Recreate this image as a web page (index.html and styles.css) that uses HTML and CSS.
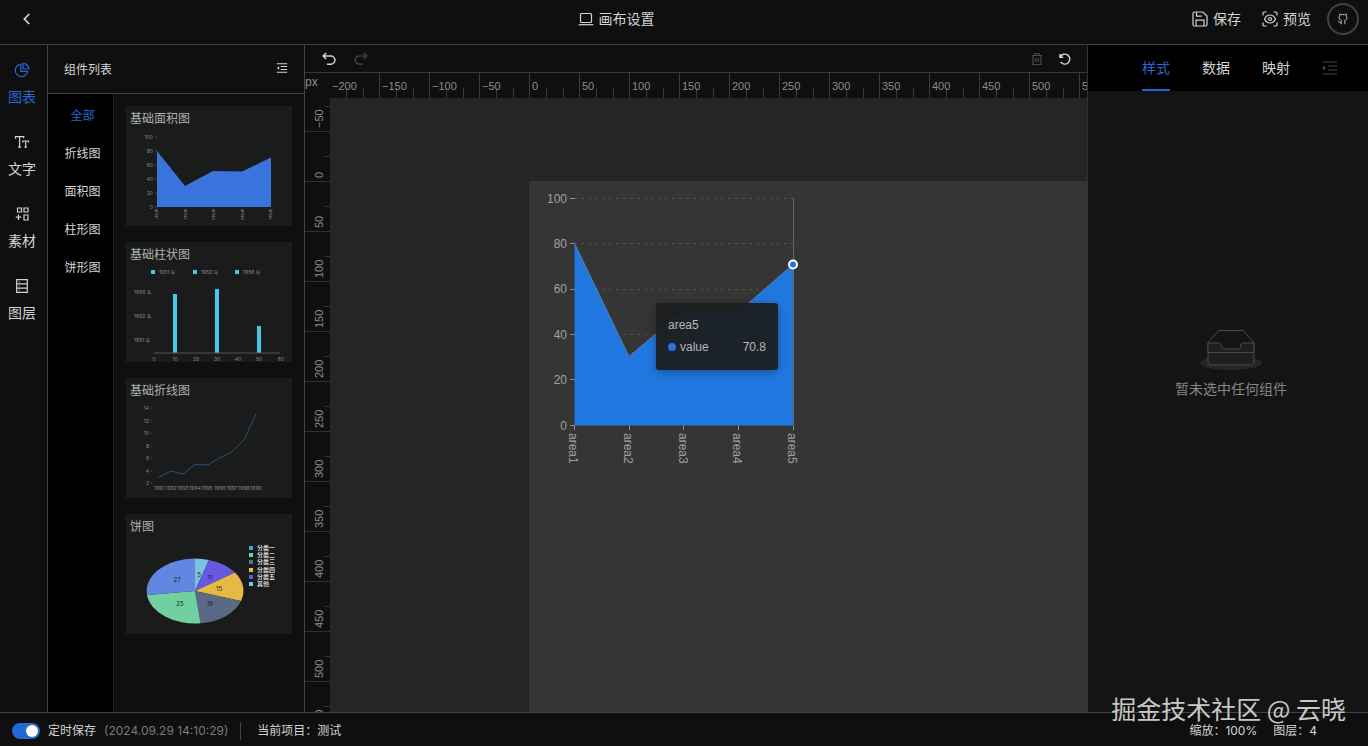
FILE: index.html
```html
<!DOCTYPE html>
<html lang="zh-CN">

<head>
    <meta charset="UTF-8">
    <meta name="viewport" content="width=device-width, initial-scale=1.0">
    <title>画布设置</title>
    <link rel="stylesheet" href="styles.css">
</head>

<body>

    <div class="app">

        <!-- Top bar -->
        <header class="topbar">
            <button class="back-btn" type="button" aria-label="返回">
                <svg class="icon" viewBox="0 0 16 16"><path d="M10.200 3 5.400 8l4.800 5" stroke-width="1.800" /></svg>
            </button>
            <button class="tool-btn" type="button">
                <svg class="icon" viewBox="0 0 16 16"><rect x="2.500" y="2.500" width="11" height="9" rx="1" /><path d="M.7 13.700h14.600" /></svg>
                画布设置
            </button>
            <div class="topbar-right">
                <div class="tools">
                    <button class="tool-btn" type="button">
                        <svg class="icon" viewBox="0 0 16 16"><path d="M1 2.500A1.500 1.500 0 0 1 2.500 1h8.300L15 5v8.500a1.500 1.500 0 0 1-1.500 1.500h-11A1.500 1.500 0 0 1 1 13.500zM4 15V9.200h8V15M4.500 1v4.200h5.200" /></svg>
                        保存
                    </button>
                    <button class="tool-btn" type="button">
                        <svg class="icon" viewBox="0 0 16 16"><path d="M1 4.500V2.200A1.200 1.200 0 0 1 2.200 1H4.500M11.500 1h2.300A1.200 1.200 0 0 1 15 2.200v2.300M15 11.500v2.300a1.200 1.200 0 0 1-1.200 1.200h-2.300M4.500 15H2.200A1.200 1.200 0 0 1 1 13.800v-2.300M2.500 8C3.700 5.300 5.600 4 8 4s4.300 1.300 5.500 4c-1.200 2.700-3.100 4-5.500 4S3.700 10.700 2.500 8z" /><circle cx="8" cy="8" r="1.500" /></svg>
                        预览
                    </button>
                </div>
                <a class="avatar" href="#" aria-label="GitHub">
                    <svg class="icon icon-sm" viewBox="0 0 16 16"><path d="M5.500 15v-3.200c0-.8.200-1.200.600-1.600C4 9.800 2.800 8.700 2.800 6.300c0-1 .2-1.700.8-2.400-.3-.8-.2-1.700.1-2.500.9 0 1.700.4 2.300.9a8 8 0 0 1 4 0c.6-.5 1.400-.9 2.300-.9.3.8.4 1.700.1 2.500.6.7.8 1.400.8 2.400 0 2.400-1.200 3.500-3.300 3.900.4.4.6.8.6 1.600V15M5.500 13c-2.500.4-2.700-1.700-4.300-1.900" /></svg>
                </a>
            </div>
        </header>

        <main class="main">

            <!-- Side menu -->
            <nav class="side-nav">
                <button class="side-item active" type="button">
                    <svg class="icon" viewBox="0 0 16 16"><path d="M6.800 2.200A6.200 6.200 0 1 0 13.600 9.400H6.800zM9 1.300V7h5.700A5.800 5.800 0 0 0 9 1.300z" /></svg>
                    图表
                </button>
                <button class="side-item" type="button">
                    <svg class="icon" viewBox="0 0 16 16"><path d="M1.500 4.800V2.700h8.200v1.500M5.600 2.700v10.500M4 13.200h3.200M8.800 8.500V7h5.700v1.500M11.700 7v6.200M10.400 13.200h2.600" /></svg>
                    文字
                </button>
                <button class="side-item" type="button">
                    <svg class="icon" viewBox="0 0 16 16"><path d="M3.500 2h4v4h-4zM10 2h4v4h-4zM10 9h4v5h-4zM4.500 8.500v5.500M1.800 11.200h5.500" /></svg>
                    素材
                </button>
                <button class="side-item" type="button">
                    <svg class="icon" viewBox="0 0 16 16"><path d="M2.700 1.700h10.600v12.600H2.700zM2.700 5.900h10.600M2.700 10.100h10.600M4.800 3.800h.8M4.800 8h.8M4.800 12.200h.8" /></svg>
                    图层
                </button>
            </nav>

            <!-- Component list -->
            <section class="components">
                <div class="components-head">
                    <h2>组件列表</h2>
                    <button class="icon-btn" type="button" aria-label="收起">
                        <svg class="icon icon-sm" viewBox="0 0 14 14"><path d="M1 2h12M5.500 5.300H13M5.500 8.700H13M1 12h12" /><path class="fill" d="M3.700 5v4L1 7z" /></svg>
                    </button>
                </div>
                <div class="components-body">
                    <div class="categories">
                        <button class="category active" type="button">全部</button>
                        <button class="category" type="button">折线图</button>
                        <button class="category" type="button">面积图</button>
                        <button class="category" type="button">柱形图</button>
                        <button class="category" type="button">饼形图</button>
                    </div>
                    <div class="cards">

                        <article class="card">
                            <h3>基础面积图</h3>
                            <svg class="thumb" viewBox="0 0 166 96">
                                <g class="end">
                                    <text x="27" y="9">100</text><text x="27" y="23">80</text><text x="27" y="37">60</text>
                                    <text x="27" y="51">40</text><text x="27" y="65">20</text><text x="27" y="79">0</text>
                                </g>
                                <path class="thumb-axis" d="M29 7h2M29 21h2M29 35h2M29 49h2M29 63h2M29 77h2" />
                                <path fill="#3974dc" d="M31 21 59 56 87 41 116 41.500 145 27.500V77H31z" />
                                <g class="tiny">
                                    <text transform="translate(29 79) rotate(90)">area1</text>
                                    <text transform="translate(58 79) rotate(90)">area2</text>
                                    <text transform="translate(86 79) rotate(90)">area3</text>
                                    <text transform="translate(115 79) rotate(90)">area4</text>
                                    <text transform="translate(143 79) rotate(90)">area5</text>
                                </g>
                            </svg>
                        </article>

                        <article class="card">
                            <h3>基础柱状图</h3>
                            <svg class="thumb" viewBox="0 0 166 96">
                                <g fill="#46c8ea">
                                    <rect x="25" y="4" width="4" height="4" /><rect x="67" y="4" width="4" height="4" /><rect x="109" y="4" width="4" height="4" />
                                    <rect x="47" y="28" width="4" height="59" /><rect x="89" y="23" width="4" height="64" /><rect x="131" y="60" width="4" height="27" />
                                </g>
                                <text x="33" y="8">1951 年</text><text x="75" y="8">1952 年</text><text x="117" y="8">1956 年</text>
                                <text x="8" y="28">1956 年</text><text x="8" y="52">1952 年</text><text x="8" y="76">1951 年</text>
                                <path class="thumb-axis" d="M28 87h126" />
                                <g class="mid">
                                    <text x="28" y="95">0</text><text x="49" y="95">10</text><text x="70" y="95">20</text><text x="91" y="95">30</text>
                                    <text x="112" y="95">40</text><text x="133" y="95">50</text><text x="155" y="95">60</text>
                                </g>
                            </svg>
                        </article>

                        <article class="card">
                            <h3>基础折线图</h3>
                            <svg class="thumb" viewBox="0 0 166 96">
                                <g class="end">
                                    <text x="23" y="8">14</text><text x="23" y="21">12</text><text x="23" y="33">10</text><text x="23" y="46">8</text>
                                    <text x="23" y="58">6</text><text x="23" y="71">4</text><text x="23" y="83">2</text>
                                </g>
                                <path class="thumb-axis" d="M25 6h1M25 19h1M25 31h1M25 44h1M25 56h1M25 69h1M25 81h1" />
                                <path class="thumb-axis faint" d="M43 44h90" stroke-dasharray="1 2 1 24" />
                                <path fill="none" stroke="#2f4d78" stroke-width="1" d="M32.500 75.500 44.500 69 57 72 69 62.500 81.500 63 93.500 56 105.500 50 118 38 130 12" />
                                <g class="mid">
                                    <text x="33" y="88">1991</text><text x="45" y="88">1992</text><text x="57" y="88">1993</text>
                                    <text x="69" y="88">1994</text><text x="81" y="88">1995</text><text x="94" y="88">1996</text>
                                    <text x="106" y="88">1997</text><text x="118" y="88">1998</text><text x="130" y="88">1999</text>
                                </g>
                            </svg>
                        </article>

                        <article class="card">
                            <h3>饼图</h3>
                            <svg class="thumb" viewBox="0 0 166 96">
                                <path fill="#7cc0e0" d="M69 53V20.500A48.500 32.500 0 0 1 83 22z" />
                                <path fill="#6659e0" d="M69 53 83 22A48.500 32.500 0 0 1 109 34.500z" />
                                <path fill="#e6b944" d="M69 53 109 34.500A48.500 32.500 0 0 1 115 63z" />
                                <path fill="#5c6985" d="M69 53 115 63A48.500 32.500 0 0 1 74.500 85.300z" />
                                <path fill="#72cfa0" d="M69 53 74.500 85.300A48.500 32.500 0 0 1 21 57z" />
                                <path fill="#6187e2" d="M69 53 21 57A48.500 32.500 0 0 1 69 20.500z" />
                                <g class="mid pie-label">
                                    <text x="51" y="44">27</text><text x="73" y="39">5</text><text x="84" y="42">11</text>
                                    <text x="93" y="53">15</text><text x="84" y="68">18</text><text x="54" y="68">25</text>
                                </g>
                                <rect x="123" y="8" width="4" height="4" fill="#5b8ff9" /><rect x="123" y="15" width="4" height="4" fill="#5ad8a6" />
                                <rect x="123" y="22" width="4" height="4" fill="#5d7092" /><rect x="123" y="30" width="4" height="4" fill="#f6bd16" />
                                <rect x="123" y="37" width="4" height="4" fill="#4a62d8" /><rect x="123" y="44" width="4" height="4" fill="#6dc8ec" />
                                <g class="legend">
                                    <text x="131" y="12">分类一</text><text x="131" y="19">分类二</text><text x="131" y="26">分类三</text>
                                    <text x="131" y="34">分类四</text><text x="131" y="41">分类五</text><text x="131" y="48">其他</text>
                                </g>
                            </svg>
                        </article>

                    </div>
                </div>
            </section>

            <!-- Canvas -->
            <section class="editor">
                <div class="editor-tools">
                    <div class="tool-group">
                        <button class="icon-btn" type="button" aria-label="撤销">
                            <svg class="icon icon-md" viewBox="0 0 14 14"><path d="M4.200 1 1.200 4l3 3M1.400 4h7.400a3.900 3.900 0 0 1 0 8.200H5" stroke-width="1.500" /></svg>
                        </button>
                        <button class="icon-btn" type="button" aria-label="重做" disabled>
                            <svg class="icon icon-md" viewBox="0 0 14 14"><path d="M9.800 1l3 3-3 3M12.600 4H5.200a3.900 3.900 0 0 0 0 8.200H9" /></svg>
                        </button>
                    </div>
                    <div class="tool-group tool-group-right">
                        <button class="icon-btn" type="button" aria-label="删除" disabled>
                            <svg class="icon icon-md" viewBox="0 0 14 14"><path d="M2 3.500h10M5 3.500v-2h4v2M3 3.500v9h8v-9M5.800 6v4M8.200 6v4" /></svg>
                        </button>
                        <button class="icon-btn" type="button" aria-label="重置">
                            <svg class="icon icon-md" viewBox="0 0 14 14"><path d="M2 2v3.200h3.200M2.300 5A5 5 0 1 1 2.600 9.800" stroke-width="1.400" /></svg>
                        </button>
                    </div>
                </div>
                <div class="stage">
                    <div class="ruler-corner">px</div>
                    <div class="ruler ruler-x">
                        <span>−200</span><span>−150</span><span>−100</span><span>−50</span><span>0</span><span>50</span>
                        <span>100</span><span>150</span><span>200</span><span>250</span><span>300</span><span>350</span>
                        <span>400</span><span>450</span><span>500</span><span>550</span>
                    </div>
                    <div class="ruler ruler-y">
                        <span>−50</span><span>0</span><span>50</span><span>100</span><span>150</span><span>200</span><span>250</span>
                        <span>300</span><span>350</span><span>400</span><span>450</span><span>500</span><span>550</span>
                    </div>
                    <div class="viewport">
                        <div class="artboard">
                            <svg class="chart" width="290" height="300" viewBox="0 0 290 300">
                                <path class="chart-grid" d="M45 17.500h219M45 62.500h219M45 108.500h219M45 153.500h219M45 198.500h219" />
                                <path class="chart-area" d="M45.500 62.500 100 175.500 154.500 129.500 209 131.500 264 83.500V244.500H45.500z" />
                                <path class="chart-line" d="M45.500 62.500 100 175.500 154.500 129.500 209 131.500 264 83.500" />
                                <path class="chart-tick" d="M41 17.500h5M41 62.500h5M41 108.500h5M41 153.500h5M41 198.500h5M41 244.500h5M45.500 244v5M100.500 244v5M154.500 244v5M209.500 244v5M264.500 244v5" />
                                <path class="chart-cursor" d="M264.500 17v228" />
                                <g class="end">
                                    <text x="38" y="22">100</text><text x="38" y="67">80</text><text x="38" y="112">60</text>
                                    <text x="38" y="158">40</text><text x="38" y="203">20</text><text x="38" y="249">0</text>
                                </g>
                                <g>
                                    <text transform="translate(40 252) rotate(90)">area1</text>
                                    <text transform="translate(95 252) rotate(90)">area2</text>
                                    <text transform="translate(150 252) rotate(90)">area3</text>
                                    <text transform="translate(204 252) rotate(90)">area4</text>
                                    <text transform="translate(259 252) rotate(90)">area5</text>
                                </g>
                                <circle cx="264" cy="83.500" r="4" fill="#2077e0" stroke="#fff" stroke-width="2" />
                            </svg>
                            <div class="tooltip">
                                <div>area5</div>
                                <div class="tooltip-row">
                                    <span class="dot"></span>
                                    <span>value</span>
                                    <span class="tooltip-value">70.8</span>
                                </div>
                            </div>
                        </div>
                    </div>
                </div>
            </section>

            <!-- Settings -->
            <aside class="settings">
                <div class="tabs">
                    <button class="tab active" type="button">样式</button>
                    <button class="tab" type="button">数据</button>
                    <button class="tab" type="button">映射</button>
                    <button class="icon-btn dim" type="button" aria-label="展开">
                        <svg class="icon" viewBox="0 0 16 16"><path d="M1 2h14M6 6h9M6 10h9M1 14h14" /><path class="fill" d="M1 5.500v5L4 8z" /></svg>
                    </button>
                </div>
                <div class="empty">
                    <svg width="64" height="41" viewBox="0 0 64 41">
                        <ellipse cx="32" cy="33" rx="31" ry="7" fill="#262626" />
                        <g fill="none" stroke="#4b4b4b">
                            <path d="M55 12.700 44.900 1.300C44.400.700 43.700.500 43 .500H21c-.7 0-1.400.200-1.900.8L9 12.700V22h46z" />
                            <path fill="#1f1f1f" d="M41.600 15.900c0-1.600 1-2.900 2.200-2.900H55v18.100c0 2.200-1.300 3.900-3 3.900H12c-1.700 0-3-1.700-3-3.900V13h11.200c1.200 0 2.200 1.300 2.200 2.900s1 3 2.200 3h14.800c1.200 0 2.200-1.400 2.200-3z" />
                            <path d="M9 22.500h46" />
                        </g>
                    </svg>
                    <p>暂未选中任何组件</p>
                </div>
            </aside>

        </main>

        <!-- Status bar -->
        <footer class="statusbar">
            <label class="autosave"><input class="switch" type="checkbox" checked>定时保存</label>
            <span class="save-time">(2024.09.29 14:10:29)</span>
            <span class="project">当前项目：测试</span>
            <div class="status-right">
                <span>缩放：100%</span>
                <span>图层：4</span>
            </div>
        </footer>

        <div class="watermark">掘金技术社区 @ 云晓</div>
    </div>

</body>

</html>
```

FILE: styles.css
```css
* {
    box-sizing: border-box;
}

body {
    margin: 0;
    background-color: #0f0f0f;
    color: #d4d4d4;
    font-family: "Liberation Sans", "Noto Sans CJK SC", sans-serif;
    font-size: 12px;
}

button {
    padding: 0;
    border: none;
    background: none;
    color: inherit;
    font-family: inherit;
    font-size: 14px;
    cursor: pointer;
}

h2,
h3,
p {
    margin: 0;
    font-size: 12px;
    font-weight: normal;
}

.app {
    position: relative;
    display: flex;
    flex-direction: column;
    height: 100vh;
    overflow: hidden;
}

.main {
    display: grid;
    grid-template-columns: 48px 257px minmax(0, 1fr) 281px;
    flex: 1;
    min-height: 0;
}

/* Icons */
.icon {
    display: block;
    width: 16px;
    height: 16px;
    fill: none;
    stroke: currentColor;
    stroke-width: 1.2;
}

.icon-md {
    width: 14px;
    height: 14px;
}

.icon-sm {
    width: 12px;
    height: 12px;
}

.icon .fill {
    fill: currentColor;
    stroke: none;
}

.icon-btn:disabled,
.dim {
    color: #4a4a4a;
}

/* Top bar */
.topbar {
    display: flex;
    align-items: center;
    justify-content: space-between;
    height: 45px;
    padding: 0 9px 6px 14px;
    border-bottom: 1px solid #434343;
}

.back-btn {
    display: flex;
    justify-content: center;
    width: 26px;
}

.tool-btn {
    display: flex;
    align-items: center;
    gap: 5px;
    line-height: 20px;
}

.topbar-right {
    display: flex;
    align-items: center;
    gap: 16px;
}

.tools {
    display: flex;
    gap: 21px;
}

.avatar {
    display: flex;
    align-items: center;
    justify-content: center;
    width: 32px;
    height: 32px;
    border: 2px solid #434343;
    border-radius: 50%;
    color: #cfcfcf;
}

/* Side menu */
.side-nav {
    display: flex;
    flex-direction: column;
    padding-right: 3px;
    border-right: 1px solid #434343;
}

.side-item {
    display: flex;
    flex-direction: column;
    align-items: center;
    justify-content: center;
    gap: 8px;
    height: 72px;
    padding-top: 8px;
    line-height: 22px;
}

.side-item.active,
.category.active,
.tab.active {
    color: #2468d8;
}

/* Component list */
.components {
    display: flex;
    flex-direction: column;
    min-height: 0;
    border-right: 1px solid #434343;
}

.components-head {
    display: flex;
    align-items: center;
    justify-content: space-between;
    height: 49px;
    padding: 0 16px 2px;
    border-bottom: 1px solid #434343;
}

.components-body {
    display: flex;
    flex: 1;
    min-height: 0;
}

.categories {
    display: flex;
    flex-direction: column;
    width: 66px;
    padding: 1px 0 0 4px;
    background-color: #000;
    border-right: 1px solid #222;
}

.category {
    height: 38px;
    font-size: 12px;
}

.cards {
    display: flex;
    flex: 1;
    flex-direction: column;
    gap: 16px;
    padding: 12px;
    overflow: hidden;
}

.card {
    flex-shrink: 0;
    height: 120px;
    background-color: #1a1b1b;
}

.card h3 {
    padding: 4px 4px 2px;
    color: #aeb0b0;
    line-height: 18px;
}

.thumb {
    display: block;
    width: 100%;
}

.thumb text {
    fill: #8a8a8a;
    font-family: Inter, "Noto Sans CJK SC", sans-serif;
    font-size: 5px;
}

.thumb .tiny text {
    font-size: 4px;
}

.thumb .pie-label text {
    fill: #222;
    font-size: 6px;
}

.thumb .legend text {
    fill: #d0d0d0;
    font-size: 6px;
    font-weight: bold;
}

.thumb-axis {
    stroke: #555;
    stroke-width: 1;
}

.faint {
    opacity: 0.5;
}

.end {
    text-anchor: end;
}

.mid {
    text-anchor: middle;
}

/* Canvas */
.editor {
    display: flex;
    flex-direction: column;
    min-height: 0;
}

.editor-tools {
    display: flex;
    align-items: center;
    justify-content: space-between;
    height: 28px;
    padding: 0 15px 0 17px;
    border-bottom: 1px solid #383838;
}

.tool-group {
    display: flex;
    gap: 18px;
}

.tool-group-right {
    gap: 14px;
}

.stage {
    display: grid;
    grid-template-columns: 25px minmax(0, 1fr);
    grid-template-rows: 25px minmax(0, 1fr);
    flex: 1;
    min-height: 0;
    color: #8c8c8c;
}

.ruler-corner {
    line-height: 18px;
}

.ruler {
    display: flex;
    overflow: hidden;
    font-size: 11px;
}

.ruler span {
    flex-shrink: 0;
    background-repeat: no-repeat;
}

.ruler-x span {
    width: 50px;
    padding-left: 2px;
    border-left: 1px solid #3a3a3a;
    line-height: 27px;
    background-image: linear-gradient(#3a3a3a, #3a3a3a), linear-gradient(#3a3a3a, #3a3a3a);
    background-size: 1px 10px;
    background-position: 16px 15px, 33px 15px;
}

.ruler-x span:first-child {
    width: 49px;
    border-left: none;
}

.ruler-y {
    flex-direction: column;
}

/* labels read upwards, so the cell is turned over */
.ruler-y span {
    width: 25px;
    height: 50px;
    padding: 3px 4px 0 0;
    border-top: 1px solid #303030;
    line-height: 20px;
    writing-mode: vertical-rl;
    transform: rotate(180deg);
    background-image: linear-gradient(#303030, #303030);
    background-size: 6px 1px;
    background-position: 0 24px;
}

.ruler-y span:first-child {
    height: 34px;
}

.viewport {
    display: flex;
    padding: 83px 0 0 199px;
    background-color: #252525;
    overflow: hidden;
}

.artboard {
    position: relative;
    flex: 1;
    background-color: #353535;
}

.chart {
    display: block;
}

.chart text {
    fill: #a0a0a0;
    font-size: 12px;
}

.chart-grid {
    stroke: #505050;
    stroke-dasharray: 3 4;
}

.chart-area {
    fill: #2077e0;
}

.chart-line {
    fill: none;
    stroke: #5682b5;
}

.chart-tick {
    stroke: #8c8c8c;
}

.chart-cursor {
    stroke: #666;
}

.tooltip {
    position: absolute;
    top: 122px;
    left: 127px;
    width: 122px;
    padding: 13px 12px 14px;
    border-radius: 3px;
    background-color: rgba(28, 30, 31, 0.95);
    box-shadow: 0 2px 8px rgba(0, 0, 0, 0.35);
    color: #b8b8b8;
    line-height: 18px;
}

.tooltip-row {
    display: flex;
    align-items: center;
    gap: 4px;
    margin-top: 4px;
}

.dot {
    width: 8px;
    height: 8px;
    border-radius: 50%;
    background-color: #2077e0;
}

.tooltip-value {
    margin-left: auto;
}

/* Settings */
.settings {
    background-color: #141414;
    border-left: 1px solid #333;
}

.tabs {
    display: flex;
    align-items: stretch;
    justify-content: flex-end;
    gap: 32px;
    height: 46px;
    padding-right: 30px;
    background-color: #000;
}

.tab {
    border-bottom: 2px solid transparent;
}

.tab.active {
    border-bottom-color: #2468d8;
}

.empty {
    display: flex;
    flex-direction: column;
    align-items: center;
    gap: 7px;
    padding: 239px 0 0 6px;
    color: #858585;
}

.empty p {
    font-size: 14px;
    line-height: 22px;
}

/* Status bar */
.statusbar {
    display: flex;
    align-items: center;
    height: 34px;
    padding: 2px 51px 0 12px;
    border-top: 1px solid #434343;
    font-family: Inter, "Noto Sans CJK SC", sans-serif;
    line-height: 18px;
}

.autosave {
    display: flex;
    align-items: center;
    gap: 8px;
}

.switch {
    appearance: none;
    display: flex;
    width: 28px;
    height: 16px;
    margin: 0;
    padding: 2px;
    border-radius: 8px;
    background-color: #2468d8;
}

.switch::before {
    content: "";
    width: 12px;
    height: 12px;
    border-radius: 50%;
    background-color: #fff;
}

.switch:checked {
    justify-content: flex-end;
}

.save-time {
    margin-left: 8px;
    color: #7a7a7a;
}

.project {
    margin-left: 12px;
    padding-left: 16px;
    border-left: 1px solid #434343;
}

.status-right {
    display: flex;
    gap: 16px;
    margin-left: auto;
}

.watermark {
    position: absolute;
    right: 22px;
    bottom: 20px;
    color: #c8c8c8;
    font-family: "Noto Sans CJK SC", sans-serif;
    font-size: 25px;
    line-height: 36px;
    pointer-events: none;
}
```
